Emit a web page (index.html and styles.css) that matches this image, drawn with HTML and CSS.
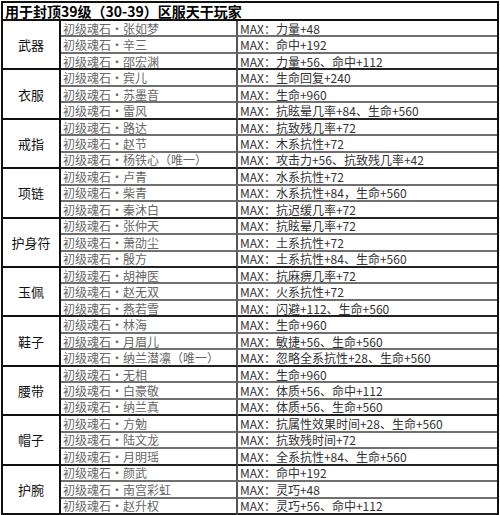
FILE: index.html
```html
<!DOCTYPE html>
<html lang="zh-CN">
<head>
<meta charset="utf-8">
<title>魂石</title>
<link rel="stylesheet" href="styles.css">
</head>
<body>
<div class="sheet">
  <div class="title"><span class="title-text">用于封顶39级（30-39）区服天干玩家</span></div>

  <div class="cat">武器</div>
  <div class="name">初级魂石・张如梦</div><div class="val">MAX：力量+48</div>
  <div class="name">初级魂石・辛三</div><div class="val">MAX：命中+192</div>
  <div class="name end">初级魂石・邵宏渊</div><div class="val end">MAX：力量+56、命中+112</div>

  <div class="cat">衣服</div>
  <div class="name">初级魂石・宾儿</div><div class="val">MAX：生命回复+240</div>
  <div class="name">初级魂石・苏墨音</div><div class="val">MAX：生命+960</div>
  <div class="name end">初级魂石・雷风</div><div class="val end">MAX：抗眩晕几率+84、生命+560</div>

  <div class="cat">戒指</div>
  <div class="name">初级魂石・路达</div><div class="val">MAX：抗致残几率+72</div>
  <div class="name">初级魂石・赵节</div><div class="val">MAX：木系抗性+72</div>
  <div class="name end">初级魂石・杨铁心（唯一）</div><div class="val end">MAX：攻击力+56、抗致残几率+42</div>

  <div class="cat">项链</div>
  <div class="name">初级魂石・卢青</div><div class="val">MAX：水系抗性+72</div>
  <div class="name">初级魂石・柴青</div><div class="val">MAX：水系抗性+84，生命+560</div>
  <div class="name end">初级魂石・秦沐白</div><div class="val end">MAX：抗迟缓几率+72</div>

  <div class="cat">护身符</div>
  <div class="name">初级魂石・张仲天</div><div class="val">MAX：抗眩晕几率+72</div>
  <div class="name">初级魂石・萧劭尘</div><div class="val">MAX：土系抗性+72</div>
  <div class="name end">初级魂石・殷方</div><div class="val end">MAX：土系抗性+84、生命+560</div>

  <div class="cat">玉佩</div>
  <div class="name">初级魂石・胡神医</div><div class="val">MAX：抗麻痹几率+72</div>
  <div class="name">初级魂石・赵无双</div><div class="val">MAX：火系抗性+72</div>
  <div class="name end">初级魂石・燕若雪</div><div class="val end">MAX：闪避+112、生命+560</div>

  <div class="cat">鞋子</div>
  <div class="name">初级魂石・林海</div><div class="val">MAX：生命+960</div>
  <div class="name">初级魂石・月眉儿</div><div class="val">MAX：敏捷+56、生命+560</div>
  <div class="name end">初级魂石・纳兰潜凛（唯一）</div><div class="val end">MAX：忽略全系抗性+28、生命+560</div>

  <div class="cat">腰带</div>
  <div class="name">初级魂石・无相</div><div class="val">MAX：生命+960</div>
  <div class="name">初级魂石・白豪敬</div><div class="val">MAX：体质+56、命中+112</div>
  <div class="name end">初级魂石・纳兰真</div><div class="val end">MAX：体质+56、生命+560</div>

  <div class="cat">帽子</div>
  <div class="name">初级魂石・方勉</div><div class="val">MAX：抗属性效果时间+28、生命+560</div>
  <div class="name">初级魂石・陆文龙</div><div class="val">MAX：抗致残时间+72</div>
  <div class="name end">初级魂石・月明瑶</div><div class="val end">MAX：全系抗性+84、生命+560</div>

  <div class="cat">护腕</div>
  <div class="name">初级魂石・颜武</div><div class="val">MAX：命中+192</div>
  <div class="name">初级魂石・南宫彩虹</div><div class="val">MAX：灵巧+48</div>
  <div class="name end">初级魂石・赵升权</div><div class="val end">MAX：灵巧+56、命中+112</div>
</div>
</body>
</html>
```

FILE: styles.css
```css
* {
  box-sizing: border-box;
}

html, body {
  margin: 0;
  padding: 0;
  background: #ffffff;
}

body {
  font-family: "Noto Sans CJK SC", "Noto Sans", sans-serif;
}

.sheet {
  margin: 1px 0 0 1px;
  width: 498px;
  height: 514px;
  border: 2px solid #111;
  border-bottom: none;
  display: grid;
  grid-template-columns: 58px 177px 1fr;
  grid-template-rows: 18px repeat(30, 1fr);
}

.title {
  grid-column: 1 / -1;
  border-bottom: 2px solid #111;
  padding-left: 2px;
  display: flex;
  align-items: center;
}

.title-text {
  font-weight: bold;
  font-size: 14px;
  line-height: 16px;
  color: #000;
  white-space: nowrap;
}

.cat {
  grid-row: span 3;
  border-right: 2px solid #111;
  border-bottom: 2px solid #111;
  display: flex;
  align-items: center;
  justify-content: center;
  font-size: 13px;
  color: #111;
}

.name,
.val {
  display: flex;
  align-items: center;
  font-size: 12px;
  line-height: 12px;
  white-space: nowrap;
  border-bottom: 2px solid #707070;
  padding-left: 2px;
  padding-top: 1px;
}

.name {
  color: #666;
  border-right: 2px solid #555;
}

.val {
  color: #333;
}

.name.end,
.val.end {
  border-bottom-color: #222;
}
```
